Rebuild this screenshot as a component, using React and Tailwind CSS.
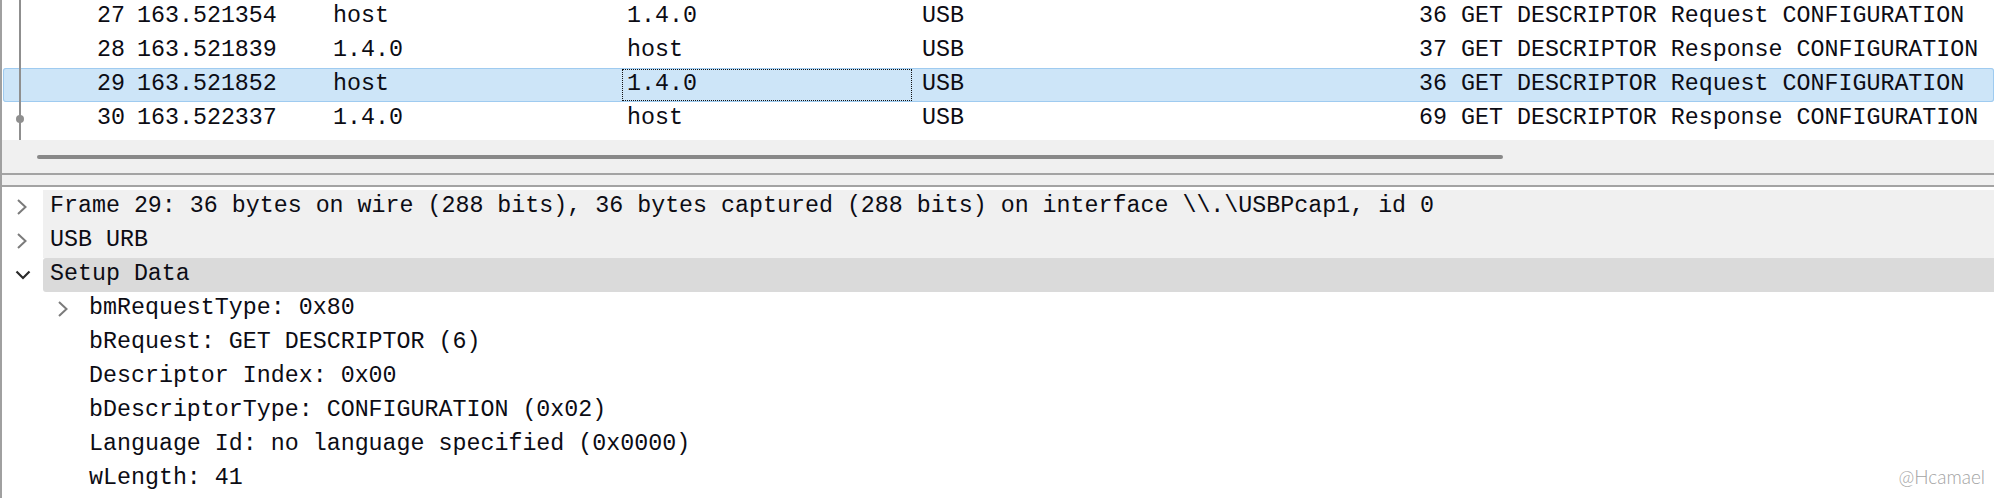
import React from "react";

const rows = [
  { no: "27", time: "163.521354", src: "host", dst: "1.4.0", proto: "USB", len: "36", info: "GET DESCRIPTOR Request CONFIGURATION" },
  { no: "28", time: "163.521839", src: "1.4.0", dst: "host", proto: "USB", len: "37", info: "GET DESCRIPTOR Response CONFIGURATION" },
  { no: "29", time: "163.521852", src: "host", dst: "1.4.0", proto: "USB", len: "36", info: "GET DESCRIPTOR Request CONFIGURATION", sel: true },
  { no: "30", time: "163.522337", src: "1.4.0", dst: "host", proto: "USB", len: "69", info: "GET DESCRIPTOR Response CONFIGURATION", last: true },
];

function ChevRight({ color = "#7b7b7b" }) {
  return (
    <svg width="12" height="18" viewBox="0 0 12 18" className="block">
      <polyline points="2,2 9.5,9 2,16" fill="none" stroke={color} strokeWidth="2" />
    </svg>
  );
}

function ChevDown() {
  return (
    <svg width="16" height="12" viewBox="0 0 16 12" className="block">
      <polyline points="1.5,2.5 8,9 14.5,2.5" fill="none" stroke="#2a2a2a" strokeWidth="2.2" />
    </svg>
  );
}

export default function App() {
  return (
    <div
      className="relative w-[1994px] h-[498px] overflow-hidden bg-white border-l-2 border-[#a0a0a0] text-[#0c0c14]"
      style={{ fontFamily: '"Liberation Mono", "DejaVu Sans Mono", monospace' }}
    >
      {/* packet list */}
      <div className="h-[140px] overflow-hidden bg-white text-[23.3px] leading-none">
        <div>
          {rows.map((r) => (
            <div
              key={r.no}
              className={
                "flex items-center h-[34px] ml-px rounded-[3px] " +
                (r.sel ? "bg-[#cde5f8] shadow-[inset_0_0_0_1px_#9fcbf0]" : "")
              }
            >
              <div className="relative w-[34px] h-full shrink-0">
                <div className={"absolute left-[16px] top-0 w-[2px] bg-[#8f8f8f] " + (r.last ? "h-[38px]" : "h-full")} />
                {r.last && (
                  <div className="absolute left-[13px] top-[13px] w-[8px] h-[8px] rounded-full bg-[#8f8f8f]" />
                )}
              </div>
              <div className="w-[94px] shrink-0 text-right pr-[6px]">{r.no}</div>
              <div className="w-[197px] shrink-0 pl-[6px]">{r.time}</div>
              <div className="w-[294px] shrink-0 pl-[5px]">{r.src}</div>
              <div
                className={
                  "w-[290px] shrink-0 pl-[4px] h-[32px] flex items-center border border-dotted " +
                  (r.sel ? "border-[#111]" : "border-transparent")
                }
              >
                {r.dst}
              </div>
              <div className="w-[388px] shrink-0 pl-[10px]">{r.proto}</div>
              <div className="w-[153px] shrink-0 text-right pr-[6px]">{r.len}</div>
              <div className="flex-1 pl-[8px] whitespace-nowrap">{r.info}</div>
            </div>
          ))}
        </div>
      </div>

      {/* horizontal scrollbar */}
      <div className="h-[33px] bg-[#f0f0f0] pt-[15px]">
        <div className="ml-[35px] w-[1466px] h-[4px] rounded-full bg-[#888888]" />
      </div>

      {/* splitter */}
      <div className="h-[2px] bg-[#a3a3a3]" />
      <div className="h-[10px] bg-[#f0f0f0]" />
      <div className="h-[2px] bg-[#a3a3a3]" />

      {/* details tree */}
      <div className="pt-[3px] text-[23.3px] leading-none">
        <div className="flex h-[34px]">
          <div className="w-[41px] shrink-0 flex items-center pl-[14px]">
            <ChevRight />
          </div>
          <div className="flex-1 flex items-center bg-[#f0f0f0] pl-[7px] whitespace-nowrap">
            Frame 29: 36 bytes on wire (288 bits), 36 bytes captured (288 bits) on interface \\.\USBPcap1, id 0
          </div>
        </div>
        <div className="flex h-[34px]">
          <div className="w-[41px] shrink-0 flex items-center pl-[14px]">
            <ChevRight />
          </div>
          <div className="flex-1 flex items-center bg-[#f0f0f0] pl-[7px]">USB URB</div>
        </div>
        <div className="flex h-[34px]">
          <div className="w-[41px] shrink-0 flex items-center pl-[13px]">
            <ChevDown />
          </div>
          <div className="flex-1 flex items-center bg-[#dadada] rounded-l-[3px] pl-[7px]">Setup Data</div>
        </div>
        <div className="flex h-[34px] items-center">
          <div className="w-[41px] shrink-0" />
          <div className="w-[39px] shrink-0 pl-[14px]">
            <ChevRight />
          </div>
          <div className="pl-[7px]">bmRequestType: 0x80</div>
        </div>
        {[
          "bRequest: GET DESCRIPTOR (6)",
          "Descriptor Index: 0x00",
          "bDescriptorType: CONFIGURATION (0x02)",
          "Language Id: no language specified (0x0000)",
          "wLength: 41",
        ].map((t) => (
          <div key={t} className="flex h-[34px] items-center">
            <div className="w-[87px] shrink-0" />
            <div className="whitespace-nowrap">{t}</div>
          </div>
        ))}
      </div>

      {/* watermark */}
      <div
        className="absolute right-[9px] bottom-[7px] text-[19px] font-light text-[#a3a3a3]"
        style={{ fontFamily: 'Lato, "Open Sans", sans-serif' }}
      >
        @Hcamael
      </div>
    </div>
  );
}
